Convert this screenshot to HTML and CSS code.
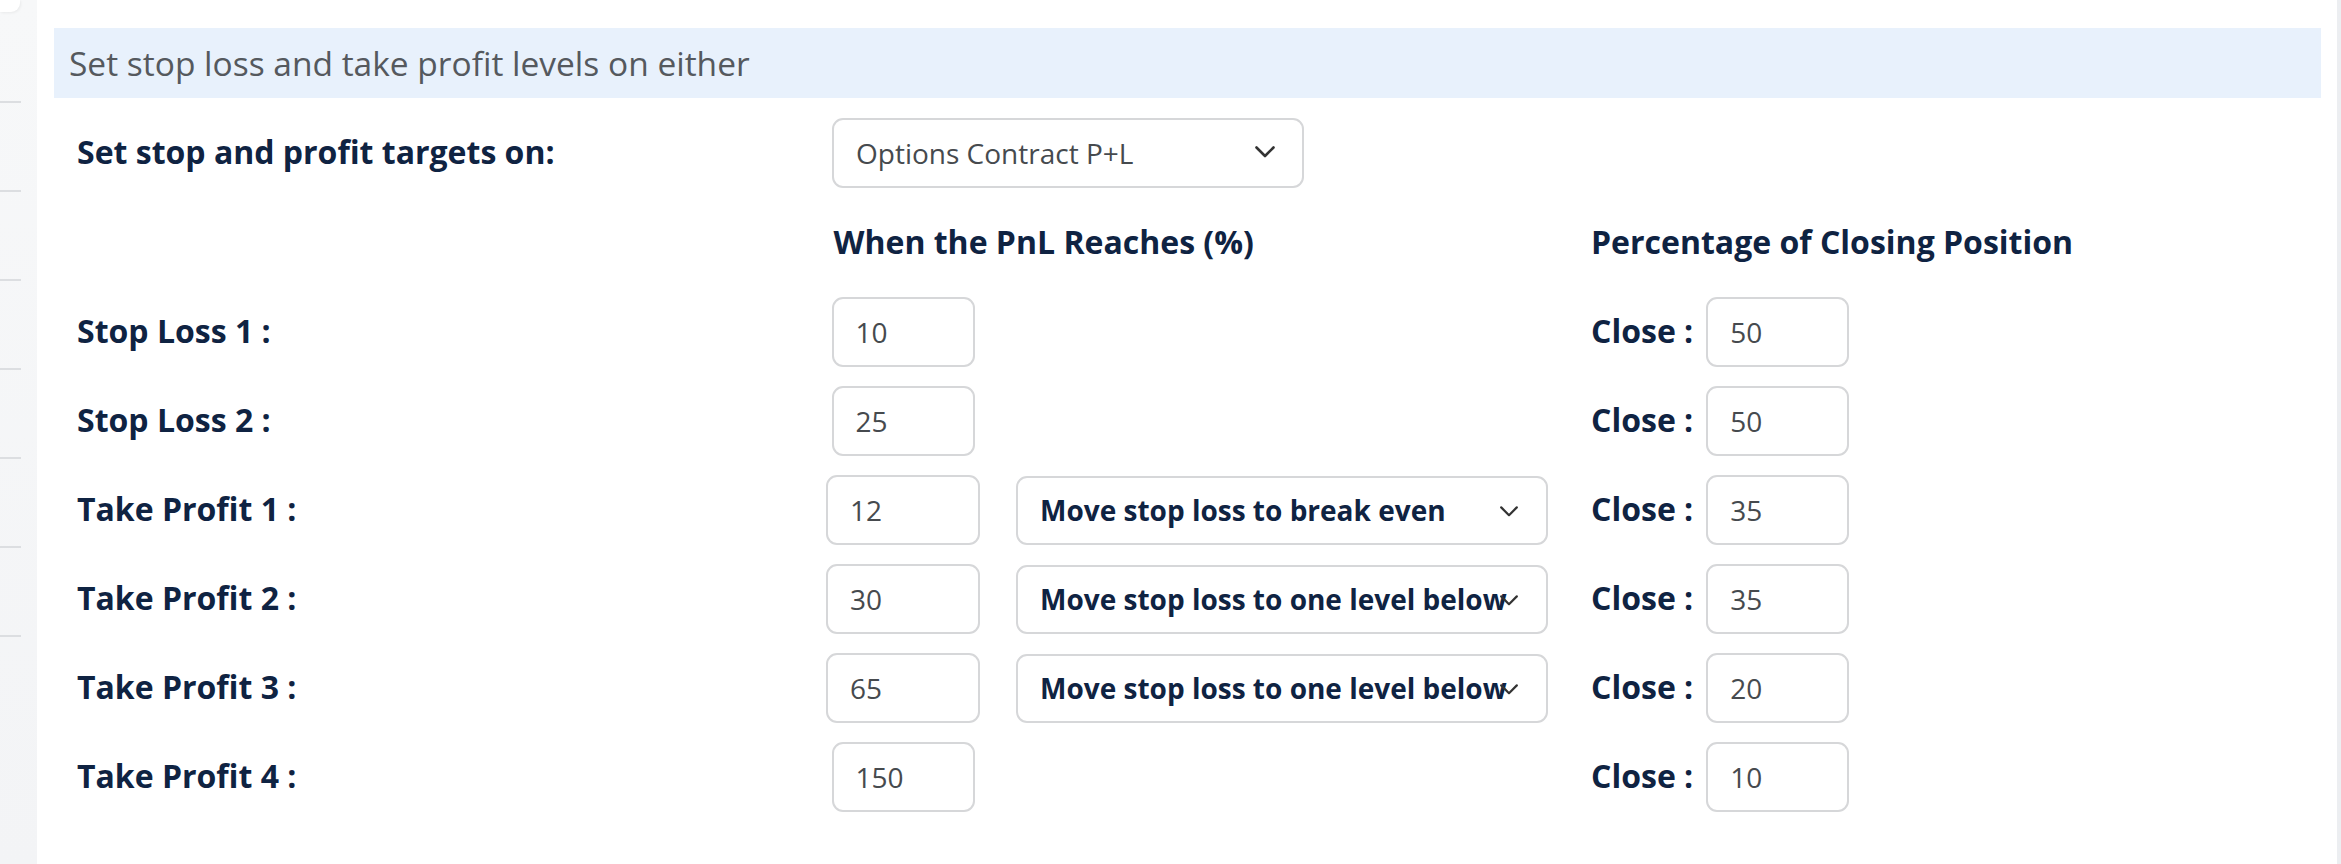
FILE: index.html
```html
<!DOCTYPE html>
<html lang="en">
<head>
<meta charset="utf-8">
<title>Stop loss and take profit</title>
<link rel="stylesheet" href="styles.css">
</head>
<body>
<div class="page">
  <aside class="sidebar">
    <div class="side-card"></div>
    <div class="side-lines">
      <span class="side-line"></span>
      <span class="side-line"></span>
      <span class="side-line"></span>
      <span class="side-line"></span>
      <span class="side-line"></span>
      <span class="side-line"></span>
      <span class="side-line"></span>
    </div>
  </aside>
  <main class="main">
    <div class="banner">Set stop loss and take profit levels on either</div>
    <div class="form">
      <div class="row row-target">
        <div class="label">Set stop and profit targets on:</div>
        <div class="select-wrap select-target">
          <select class="select select-light"><option>Options Contract P+L</option></select>
          <svg class="chev" viewBox="0 0 20 12" width="20" height="12"><path d="M1.5 1.5 L10 10 L18.5 1.5" fill="none" stroke="#333" stroke-width="2.6" stroke-linecap="round" stroke-linejoin="round"/></svg>
        </div>
      </div>
      <div class="row row-head">
        <div class="label"></div>
        <div class="head head-pnl">When the PnL Reaches (%)</div>
        <div class="head head-close">Percentage of Closing Position</div>
      </div>
      <div class="row row-level">
        <div class="label">Stop Loss 1 :</div>
        <div class="cell-in"><input class="input input-narrow" value="10"></div>
        <div class="cell-sel"></div>
        <div class="cell-close"><span class="close-label">Close :</span><input class="input input-narrow" value="50"></div>
      </div>
      <div class="row row-level">
        <div class="label">Stop Loss 2 :</div>
        <div class="cell-in"><input class="input input-narrow" value="25"></div>
        <div class="cell-sel"></div>
        <div class="cell-close"><span class="close-label">Close :</span><input class="input input-narrow" value="50"></div>
      </div>
      <div class="row row-level">
        <div class="label">Take Profit 1 :</div>
        <div class="cell-in"><input class="input input-wide" value="12"></div>
        <div class="cell-sel">
          <div class="select-wrap select-move">
            <select class="select select-bold"><option>Move stop loss to break even</option></select>
            <svg class="chev chev-move" viewBox="0 0 20 12" width="20" height="11"><path d="M1.5 1.5 L10 10 L18.5 1.5" fill="none" stroke="#333" stroke-width="2.4" stroke-linecap="round" stroke-linejoin="round"/></svg>
          </div>
        </div>
        <div class="cell-close"><span class="close-label">Close :</span><input class="input input-narrow" value="35"></div>
      </div>
      <div class="row row-level">
        <div class="label">Take Profit 2 :</div>
        <div class="cell-in"><input class="input input-wide" value="30"></div>
        <div class="cell-sel">
          <div class="select-wrap select-move">
            <select class="select select-bold"><option>Move stop loss to one level below</option></select>
            <svg class="chev chev-move" viewBox="0 0 20 12" width="20" height="11"><path d="M1.5 1.5 L10 10 L18.5 1.5" fill="none" stroke="#333" stroke-width="2.4" stroke-linecap="round" stroke-linejoin="round"/></svg>
          </div>
        </div>
        <div class="cell-close"><span class="close-label">Close :</span><input class="input input-narrow" value="35"></div>
      </div>
      <div class="row row-level">
        <div class="label">Take Profit 3 :</div>
        <div class="cell-in"><input class="input input-wide" value="65"></div>
        <div class="cell-sel">
          <div class="select-wrap select-move">
            <select class="select select-bold"><option>Move stop loss to one level below</option></select>
            <svg class="chev chev-move" viewBox="0 0 20 12" width="20" height="11"><path d="M1.5 1.5 L10 10 L18.5 1.5" fill="none" stroke="#333" stroke-width="2.4" stroke-linecap="round" stroke-linejoin="round"/></svg>
          </div>
        </div>
        <div class="cell-close"><span class="close-label">Close :</span><input class="input input-narrow" value="20"></div>
      </div>
      <div class="row row-level">
        <div class="label">Take Profit 4 :</div>
        <div class="cell-in"><input class="input input-narrow" value="150"></div>
        <div class="cell-sel"></div>
        <div class="cell-close"><span class="close-label">Close :</span><input class="input input-narrow" value="10"></div>
      </div>
    </div>
  </main>
  <div class="scroll-strip"></div>
</div>
</body>
</html>
```
FILE: styles.css
```css
html, body {
  margin: 0;
  padding: 0;
  background: #ffffff;
}
body {
  font-family: "Open Sans", "Noto Sans", sans-serif;
  color: #0f2342;
  width: 2341px;
  height: 864px;
  overflow: hidden;
}
.page {
  display: flex;
  height: 864px;
}
.sidebar {
  width: 37px;
  flex: 0 0 37px;
  background: linear-gradient(#f7f8f9, #f3f4f6);
  display: flex;
  flex-direction: column;
}
.side-card {
  width: 20px;
  height: 12px;
  background: #ffffff;
  border-bottom-right-radius: 9px;
  box-shadow: 1px 1px 3px rgba(0,0,0,0.06);
}
.side-lines {
  display: flex;
  flex-direction: column;
  gap: 87px;
  padding-top: 89px;
}
.side-line {
  display: block;
  width: 21px;
  height: 2px;
  background: #dcdee1;
}
.main {
  flex: 1;
  padding: 28px 16px 0 16.5px;
  min-width: 0;
}
.banner {
  height: 70px;
  background: #e8f1fc;
  color: #55595e;
  font-size: 33.5px;
  line-height: 70px;
  padding-left: 15.5px;
  white-space: nowrap;
}
.form {
  padding: 20px 0 0 23.5px;
}
.row {
  display: grid;
  grid-template-columns: 749px 154px 568px 1fr;
  column-gap: 0;
  align-items: center;
}
.row-head {
  margin-top: 35px;
  height: 40px;
}
.row-level {
  height: 70px;
  margin-top: 19px;
}
.row-head + .row-level {
  margin-top: 34px;
}
.label {
  font-weight: 700;
  font-size: 32px;
  line-height: 40px;
  white-space: nowrap;
  margin-top: -2px;
}
.head {
  font-weight: 700;
  font-size: 32px;
  line-height: 40px;
  white-space: nowrap;
  margin-top: -2px;
}
.head-pnl {
  grid-column: 2 / 4;
  padding-left: 7.5px;
}
.head-close {
  padding-left: 43px;
}
.cell-in {
  display: flex;
  justify-content: center;
}
.cell-sel {
  padding-left: 36px;
}
.cell-close {
  display: flex;
  align-items: center;
  gap: 13px;
  padding-left: 43px;
}
.close-label {
  font-weight: 700;
  font-size: 32px;
  line-height: 40px;
  white-space: nowrap;
  margin-top: -3px;
}
.input {
  box-sizing: border-box;
  height: 70px;
  border: 2px solid #d6d7d9;
  border-radius: 11px;
  padding: 0 0 0 22px;
  font-family: "Open Sans", "Noto Sans", sans-serif;
  font-size: 28px;
  color: #464a4e;
  background: #fff;
  outline: none;
  margin: 0;
}
.input-narrow {
  width: 143px;
}
.input-wide {
  width: 154px;
}
.select-wrap {
  position: relative;
}
.select-target {
  grid-column: 2 / 4;
  margin-left: 6px;
  width: 472px;
  height: 70px;
}
.select-move {
  width: 532px;
  height: 69px;
}
.select {
  appearance: none;
  -webkit-appearance: none;
  box-sizing: border-box;
  width: 100%;
  height: 100%;
  border: 2px solid #d6d7d9;
  border-radius: 11px;
  background: #fff;
  font-family: "Open Sans", "Noto Sans", sans-serif;
  padding: 0 20px 0 22px;
  margin: 0;
  outline: none;
}
.select-light {
  font-size: 28px;
  color: #464a4e;
}
.select-bold {
  font-size: 28px;
  font-weight: 700;
  color: #0f2342;
}
.chev {
  position: absolute;
  right: 29px;
  top: 28px;
  pointer-events: none;
}
.chev-move {
  right: 29px;
  top: 30px;
}
.scroll-strip {
  width: 4px;
  flex: 0 0 4px;
  background: #eceef1;
}
```
